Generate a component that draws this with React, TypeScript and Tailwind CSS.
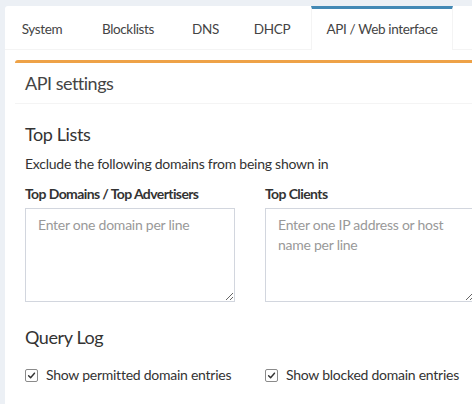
import React from 'react';

const tabs = [
  { label: 'System', w: 'w-[72px]' },
  { label: 'Blocklists', w: 'w-[86px]' },
  { label: 'DNS', w: 'w-[55px]' },
  { label: 'DHCP', w: 'w-[64px]' },
];

const Check: React.FC = () => (
  <span className="inline-flex h-[13px] w-[13px] shrink-0 items-center justify-center rounded-[2px] border border-[#8a8a8a] bg-white">
    <svg viewBox="0 0 10 10" className="h-[9px] w-[9px]">
      <path d="M1.8 5.2 L4 7.4 L8.3 2.4" fill="none" stroke="#333" strokeWidth="1.6" strokeLinecap="round" strokeLinejoin="round" />
    </svg>
  </span>
);

const App: React.FC = () => {
  return (
    <div className="h-[404px] w-[472px] overflow-hidden bg-[#ecf0f5] pl-[5px] pt-[6px] text-[14px] tracking-[-0.25px] text-[#333]" style={{ fontFamily: 'Lato, "Open Sans", sans-serif' }}>
      <div className="h-[420px] w-[540px] rounded-tl-[3px] bg-white">
        {/* tabs */}
        <div className="flex h-[44px] gap-[7px] border-b border-[#f4f4f4] pl-[1px] text-[13.5px] tracking-[-0.35px]">
          {tabs.map(t => (
            <div key={t.label} className={`${t.w} flex items-center justify-center pt-[3px] text-[#444]`}>{t.label}</div>
          ))}
          <div className="-mb-px flex w-[142px] items-center justify-center border-x border-t-[3px] border-x-[#f4f4f4] border-t-[#4389b5] bg-white text-[#444]">
            API / Web interface
          </div>
        </div>

        {/* tab content */}
        <div className="p-[10px]">
          <div className="rounded-[3px] border-t-[3px] border-[#eea247] bg-white">
            <div className="border-b border-[#f4f4f4] px-[10px] py-[10px]">
              <h3 className="text-[18px] leading-[20px] tracking-[-0.5px] text-[#444]">API settings</h3>
            </div>
            <div className="p-[10px]">
              <h4 className="mt-[10px] mb-[10px] text-[18px] leading-[20px] tracking-[-0.4px]">Top Lists</h4>
              <p className="mb-[10px] leading-[20px]">Exclude the following domains from being shown in</p>
              <div className="grid grid-cols-[210px_210px] gap-x-[30px]">
                <div>
                  <label className="mb-[4px] block font-bold leading-[20px] tracking-[-0.6px]">Top Domains / Top Advertisers</label>
                  <textarea
                    className="block h-[94px] w-[210px] resize-y border border-[#d2d6de] px-[12px] py-[6px] leading-[20px] placeholder:text-[#999] outline-none"
                    placeholder="Enter one domain per line"
                  />
                </div>
                <div>
                  <label className="mb-[4px] block font-bold leading-[20px] tracking-[-0.6px]">Top Clients</label>
                  <textarea
                    className="block h-[94px] w-[210px] resize-y border border-[#d2d6de] px-[12px] py-[6px] leading-[20px] placeholder:text-[#999] outline-none"
                    placeholder="Enter one IP address or host name per line"
                  />
                </div>
              </div>
              <h4 className="mt-[25px] mb-[18px] text-[18px] leading-[20px] tracking-[-0.4px]">Query Log</h4>
              <div className="grid grid-cols-[210px_210px] gap-x-[30px]">
                <label className="flex items-center gap-[8px] whitespace-nowrap leading-[20px]">
                  <Check />
                  Show permitted domain entries
                </label>
                <label className="flex items-center gap-[8px] whitespace-nowrap leading-[20px]">
                  <Check />
                  Show blocked domain entries
                </label>
              </div>
            </div>
          </div>
        </div>
      </div>
    </div>
  );
};

export default App;
